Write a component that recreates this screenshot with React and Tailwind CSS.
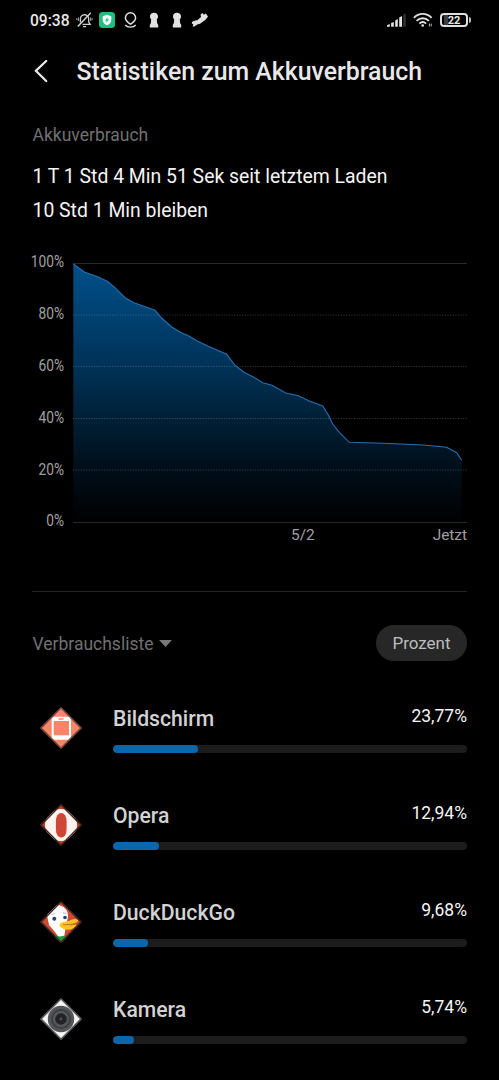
import React from "react";

const LINE =
  "73.3,264 84.3,272 98.3,277 107.3,281.3 115,287.7 125,297.7 134,302.7 155,310.3 161.7,318 171.7,327 180,332 189.3,336.3 196.7,340.7 208.3,346.3 226.7,354.3 235,365.3 244,372.3 253.3,377 262.7,382.7 272,385.3 285.7,393 298.3,395.7 309.3,401 322.7,406 328.3,415 332.7,424 339.3,432.3 349.3,442.3 383,443.3 423.3,445 446.7,447.3 456.7,452.7 461.7,460.3";

function StatusBar() {
  return (
    <header className="flex h-10 items-center justify-between pr-[28px] pl-[30px] text-[#e8e8e8]">
      <div className="flex items-center">
        <span className="w-[46px] pt-[2px] text-[15.6px] leading-5 font-medium whitespace-nowrap">09:38</span>
        <svg className="h-4 w-[17px]" viewBox="0 0 17 16" fill="none" stroke="#cfcfcf" strokeWidth="1.3">
          <path d="M4.4 10.5V7C4.4 4.6 6 3 8.5 2.6C11 3 12.7 4.6 12.7 7V10L14.2 12.4H6.5" />
          <path d="M7 14.6H10" />
          <path d="M2.4 5.4V9M14.7 5.4V9M.8 6.2V8.2M16.2 6.2V8.2" strokeWidth="1" stroke="#a8a8a8" />
          <path d="M14.8 .8L1.8 14.4" strokeWidth="1.5" />
        </svg>
        <svg className="ml-[6px] h-4 w-4" viewBox="0 0 16 16">
          <rect width="16" height="16" rx="3.5" fill="#1fbf83" />
          <path d="M8 2.7L12.3 4.3V8C12.3 10.5 10.5 12.3 8 13.3C5.5 12.3 3.7 10.5 3.7 8V4.3Z" fill="#f2fff9" />
          <path d="M8.8 4.9L5.9 8.5H7.7L7.1 11L10.1 7.3H8.2Z" fill="#1fbf83" />
        </svg>
        <svg className="ml-[9px] h-[17px] w-[13px]" viewBox="0 0 13 17" fill="none" stroke="#e2e2e2" strokeWidth="1.5">
          <path d="M6.5 12.2C4 10.4 1.4 8.6 1.4 5.9A5.1 5.1 0 0 1 11.6 5.9C11.6 8.6 9 10.4 6.5 12.2Z" />
          <path d="M1.3 13C3.4 15.9 9.6 15.9 11.7 13" strokeWidth="1.3" />
        </svg>
        {[0, 1].map((i) => (
          <svg key={i} className="ml-[12px] h-4 w-[11px]" viewBox="0 0 11 16" fill="#e2e2e2">
            <path d="M5 .7C7.5 .7 9 2.2 9 4.3C9 5.8 8.6 6.6 7.8 7.4L8.1 11L9.2 13V15.5H.8V13L1.9 11L2.2 7.4C1.4 6.6 1 5.8 1 4.3C1 2.2 2.5 .7 5 .7Z" />
          </svg>
        ))}
        <svg className="ml-[8px] h-4 w-[18px]" viewBox="0 0 18 16" fill="#e2e2e2">
          <path d="M.9 10.2L3 8.4L4 9.6L4.8 7.8L6 8.4L10 5L9.6 2.4L11.6 1L12.8 2.8L14.8 1.4L17 4.6L14.8 7.4L9 11.8L6.2 12.4L3.4 14.6L1.6 14.4L2.4 12.4L.9 11.6Z" />
        </svg>
      </div>
      <div className="flex items-center">
        <svg className="h-[15px] w-[19px]" viewBox="0 0 19 15" fill="#e2e2e2">
          <path d="M0 13.8V12.2L2.8 11V13.8ZM4.1 13.8V10L6.8 8.9V13.8ZM8.2 13.8V7.4L10.8 6V13.8ZM12.2 13.8V4.6L15 3V13.8Z" />
          <path d="M16.4 13.8V1.5L18.7.5V13.8Z" fill="#343434" />
        </svg>
        <svg className="ml-[7px] h-4 w-[20px]" viewBox="0 0 20 16" fill="none" stroke="#e2e2e2" strokeWidth="1.9">
          <path d="M.9 5.8C6 .6 13.5.6 18.6 5.8M3.6 8.9C7.1 5.4 12.3 5.4 15.8 8.9M6.4 11.6C8.4 9.7 11.1 9.7 13.1 11.6" />
          <circle cx="9.7" cy="13.5" r="1.3" fill="#e2e2e2" stroke="none" />
          <path d="M16.4 14.4V11.6M18.2 11.6V14.4" strokeWidth="1" stroke="#bdbdbd" />
        </svg>
        <div className="ml-[7px] flex h-[14px] w-[28px] items-center justify-center rounded-[4px] border-2 border-[#dedede] bg-[linear-gradient(90deg,transparent_8%,#3d3d3d_8%,#3d3d3d_27%,transparent_27%)] text-[11px] leading-none font-bold">
          22
        </div>
        <div className="ml-px h-[6px] w-[2px] rounded-r bg-[#bdbdbd]" />
      </div>
    </header>
  );
}

function Chart() {
  return (
    <div className="mt-[23px] flex">
      <div className="flex h-[259px] w-[73px] shrink-0 flex-col justify-between pr-[9px] text-right text-[15.6px] text-[#a0a0a0]">
        {["100%", "80%", "60%", "40%", "20%", "0%"].map((t) => (
          <div key={t} className="flex h-0 origin-right scale-x-[0.88] items-center justify-end">{t}</div>
        ))}
      </div>
      <div className="w-[394px]">
        <svg className="block h-[260px] w-[394px]" viewBox="73 263 394 260">
          <defs>
            <linearGradient id="usage" x1="0" y1="263" x2="0" y2="522" gradientUnits="userSpaceOnUse">
              <stop offset="0" stopColor="#00508b" />
              <stop offset=".4" stopColor="#003257" />
              <stop offset=".75" stopColor="#00121f" />
              <stop offset="1" stopColor="#000" />
            </linearGradient>
          </defs>
          <polygon points={`73.3,522 ${LINE} 461.7,522`} fill="url(#usage)" />
          <path d="M73 263.5H467M73 522.5H467" stroke="#292929" />
          <path d="M73 315H467M73 366.5H467M73 418.5H467M73 470H467" stroke="#fff" strokeOpacity=".2" strokeDasharray="1.2 1.4" />
          <polyline points={LINE} fill="none" stroke="#2470b1" strokeWidth="1.1" />
        </svg>
        <div className="flex justify-between pt-[2px] pl-[218px] text-[15.4px] leading-5 text-[#a0a0a0]">
          <span>5/2</span>
          <span>Jetzt</span>
        </div>
      </div>
    </div>
  );
}

function ScreenIcon() {
  return (
    <g>
      <path d="M21 0L42 21L21 42L0 21Z" fill="#f98569" />
      <rect x="11.7" y="9.8" width="19.3" height="23" rx="3" fill="#fff" />
      <rect x="13.7" y="14" width="15.3" height="14.3" fill="#f98569" />
      <path d="M18.5 12H23.5" stroke="#f98569" strokeWidth="1.4" />
    </g>
  );
}

function OperaIcon() {
  return (
    <g>
      <path d="M21 0L42 21L21 42L0 21Z" fill="#b8412c" />
      <circle cx="21" cy="21" r="16" fill="#fff2ef" />
      <rect x="15.9" y="9" width="10.7" height="24.5" rx="5.3" ry="8" fill="#cc4835" />
    </g>
  );
}

function DuckIcon() {
  return (
    <g>
      <path d="M21 0L42 21L21 42L0 21Z" fill="#ce4b31" />
      <path d="M7 14C9 5 15 3 20 4.5C25 6 28.5 10 28 16L26 24L24 37L20 38L15 31L9 24Z" fill="#fff" />
      <path d="M14 34L20 35.5L27 34V40L18 42Z" fill="#279939" />
      <path d="M20 23C22 20 28 21 31 19C35 17 39 18 38 20C36 23 31 24 28 24C31 25 36 23 37 24C34 29 26 30 22 27C20 26 19 25 20 23Z" fill="#ffc51e" />
      <path d="M23 23.8C28 23.6 34 23.4 36 21.6" fill="none" stroke="#bb791e" />
      <circle cx="14.3" cy="17.8" r="2" fill="#294569" />
      <circle cx="25" cy="16.5" r="1.8" fill="#294569" />
      <path d="M11.5 13.6L14.5 12.6M23 12L26.5 12.3" stroke="#a9bbd2" />
    </g>
  );
}

function CameraIcon() {
  return (
    <g>
      <path d="M21 0L42 21L21 42L0 21Z" fill="#f5f5f5" />
      <circle cx="21" cy="21" r="13.2" fill="#55565a" />
      <circle cx="21" cy="21" r="10.2" fill="#414144" />
      <circle cx="21" cy="21" r="8" fill="#57585a" />
      <circle cx="21" cy="21" r="5.8" fill="#222326" />
      <circle cx="21" cy="21" r="1.4" fill="#5c5446" />
    </g>
  );
}

const APPS = [
  { name: "Bildschirm", pct: "23,77%", bar: 85, Icon: ScreenIcon, edge: "#74483f" },
  { name: "Opera", pct: "12,94%", bar: 46, Icon: OperaIcon, edge: "#47251f" },
  { name: "DuckDuckGo", pct: "9,68%", bar: 35, Icon: DuckIcon, edge: "#3b2824" },
  { name: "Kamera", pct: "5,74%", bar: 21, Icon: CameraIcon, edge: "#555555" },
];

function AppRow({ name, pct, bar, Icon, edge }) {
  const clip = `clip-${name}`;
  return (
    <li className="flex h-[97px] pr-8 pl-10">
      <svg className="mt-[27px] h-[42px] w-[42px] shrink-0" viewBox="0 0 42 42">
        <clipPath id={clip}>
          <path d="M21 0L42 21L21 42L0 21Z" />
        </clipPath>
        <g clipPath={`url(#${clip})`}>
          <Icon />
          <path d="M21 .7L41.3 21L21 41.3L.7 21Z" fill="none" stroke={edge} strokeWidth="1.8" />
        </g>
      </svg>
      <div className="ml-[31px] flex-1 pt-[23px]">
        <div className="flex h-[42px] justify-between">
          <span className="pt-[2px] text-[21.2px] leading-7 font-medium text-[#d2d2d2]">{name}</span>
          <span className="pt-px text-[17.5px] leading-6 text-[#f5f5f5]">{pct}</span>
        </div>
        <div className="h-2 overflow-hidden rounded-full bg-[#1c1c1c]">
          <div className="h-full rounded-full bg-[#0b67a9]" style={{ width: bar }} />
        </div>
      </div>
    </li>
  );
}

export default function App() {
  return (
    <main className="h-[1080px] w-[499px] overflow-hidden bg-black [font-family:Roboto,sans-serif]">
      <StatusBar />
      <div className="flex h-16 items-center pl-[34px]">
        <svg className="h-6 w-[14px]" viewBox="0 0 14 24" fill="none" stroke="#e8e8e8" strokeWidth="2.3" strokeLinecap="round" strokeLinejoin="round">
          <path d="M12.2 1L1.8 10.8L12.2 21" />
        </svg>
        <h1 className="ml-[28.5px] text-[24.85px] font-medium whitespace-nowrap text-[#e8e8e8]">Statistiken zum Akkuverbrauch</h1>
      </div>
      <section className="h-[136px] pt-5 pl-[32.5px]">
        <h2 className="text-[17.5px] leading-[22px] text-[#707070]">Akkuverbrauch</h2>
        <div className="mt-[14px] text-[19.4px] leading-[34px] whitespace-nowrap text-[#f5f5f5]">
          <p>1 T 1 Std 4 Min 51 Sek seit letztem Laden</p>
          <p>10 Std 1 Min bleiben</p>
        </div>
      </section>
      <Chart />
      <div className="mx-8 mt-[46px] border-t border-[#222222]" />
      <div className="mt-[33px] flex h-9 items-center justify-between pr-8 pl-[32.5px]">
        <button className="flex items-center pt-[2px] text-[17.5px] text-[#707070]">
          Verbrauchsliste
          <svg className="mb-[2px] ml-[6px] h-[7px] w-[13px]" viewBox="0 0 13 7" fill="#787878">
            <path d="M0 0H13L6.5 7Z" />
          </svg>
        </button>
        <button className="h-9 w-[91px] rounded-full bg-[#272727] pt-[2px] text-[17px] text-[#bebebe]">Prozent</button>
      </div>
      <ul className="mt-[19px]">
        {APPS.map((app) => (
          <AppRow key={app.name} {...app} />
        ))}
      </ul>
    </main>
  );
}
